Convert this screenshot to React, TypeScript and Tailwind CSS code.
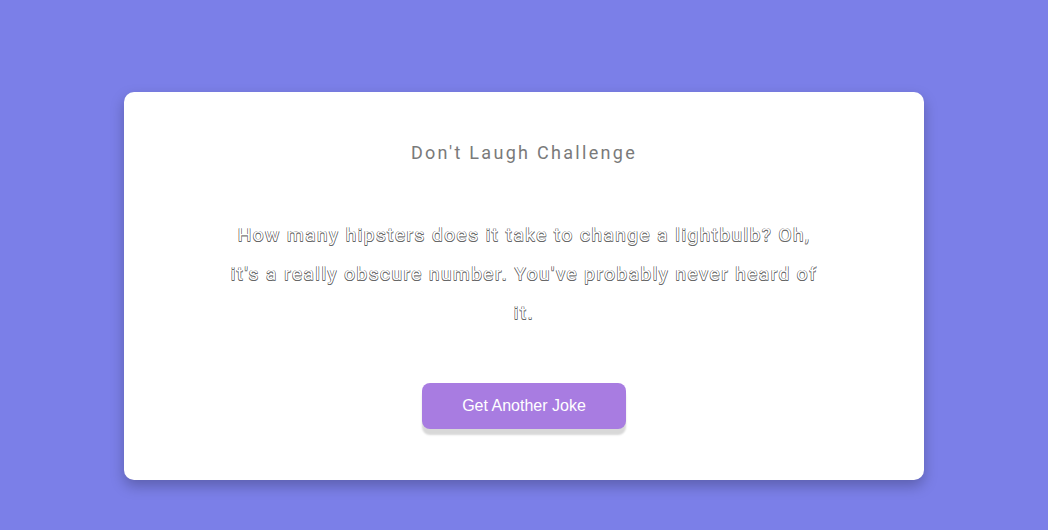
export default function App() {
  return (
    <div className="w-[1048px] h-[530px] bg-[#7b7fe8] flex justify-center pt-[92px]">
      <div className="w-[800px] h-[388px] bg-white rounded-[10px] shadow-[0_6px_14px_rgba(0,0,0,0.25)] flex flex-col items-center px-[100px] pt-[50px]">
        <h3 className="font-['Roboto',sans-serif] text-[18px] leading-[22px] tracking-[2.3px] text-[#7a7a7a]">
          Don't Laugh Challenge
        </h3>
        <p className="mt-[51px] font-['Roboto',sans-serif] text-[19px] leading-[39px] tracking-[1.5px] text-center text-white [text-shadow:0.5px_0.5px_0_#666,-0.5px_-0.5px_0_#666,0.5px_-0.5px_0_#666,-0.5px_0.5px_0_#666]">
          How many hipsters does it take to change a lightbulb? Oh, it's a really obscure number. You've probably never heard of it.
        </p>
        <button className="mt-[51px] w-[204px] h-[46px] rounded-[8px] bg-[#a87ce1] text-white font-['Liberation_Sans',Arial,sans-serif] text-[16px] shadow-[0_6px_2px_#d8d8d8]">
          Get Another Joke
        </button>
      </div>
    </div>
  );
}
